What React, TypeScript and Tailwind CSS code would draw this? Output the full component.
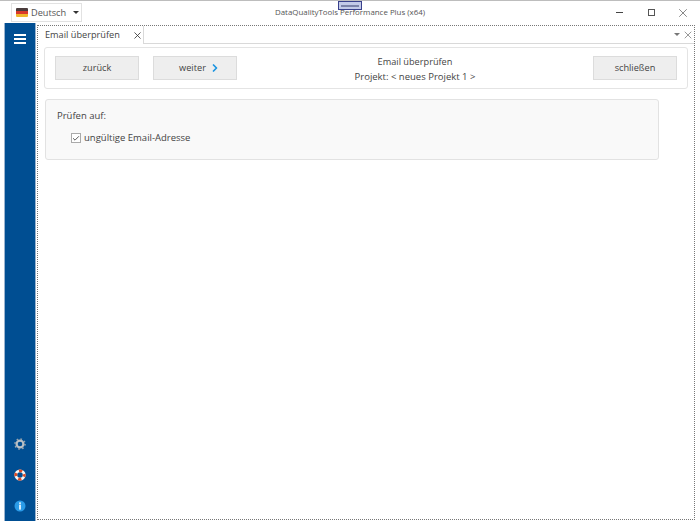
import { X, ChevronRight, Check } from "lucide-react";

function Flag() {
  return (
    <svg width="12" height="9" viewBox="0 0 12 9" className="rounded-[1px]">
      <rect width="12" height="3" fill="#4a3c3c" />
      <rect y="3" width="12" height="3" fill="#d8392b" />
      <rect y="6" width="12" height="3" fill="#efb62c" />
    </svg>
  );
}

function Gear() {
  return (
    <svg width="12" height="12" viewBox="0 0 12 12">
      <circle cx="6" cy="6" r="3.4" fill="none" stroke="#b9c0c6" strokeWidth="2.2" />
      <circle cx="6" cy="6" r="5" fill="none" stroke="#9aa5ad" strokeWidth="1.6" strokeDasharray="1.6 2.3" />
    </svg>
  );
}

function Lifebuoy() {
  return (
    <svg width="12" height="12" viewBox="0 0 12 12">
      <circle cx="6" cy="6" r="4.2" fill="none" stroke="#f4f4f4" strokeWidth="2.8" />
      <circle cx="6" cy="6" r="4.2" fill="none" stroke="#dc4a24" strokeWidth="2.8" strokeDasharray="3.3 3.3" strokeDashoffset="1.6" />
    </svg>
  );
}

function Info() {
  return (
    <svg width="12" height="12" viewBox="0 0 12 12">
      <circle cx="6" cy="6" r="5.5" fill="#2a9be8" />
      <rect x="5.2" y="2.4" width="1.6" height="1.5" fill="#fff" />
      <rect x="5.2" y="4.6" width="1.6" height="5" fill="#fff" />
    </svg>
  );
}

function Btn({ children, className }: { children: React.ReactNode; className?: string }) {
  return (
    <button className={`flex h-[24px] w-[84px] items-center justify-center border border-[#dcdcdc] bg-[#eeeeee] text-[9.2px] text-[#444] ${className ?? ""}`}>
      {children}
    </button>
  );
}

export default function App() {
  return (
    <div className="relative flex h-[525px] w-[700px] flex-col overflow-hidden border-t border-[#bdbdbd] bg-white text-[9.5px] text-[#444] [font-family:'Open_Sans',sans-serif]">
      <div className="absolute left-[338px] top-0 flex h-[9px] w-[24px] items-center justify-center border border-[#39418c] bg-[#c3cbe8]">
        <div className="h-[2px] w-[18px] bg-[#7b83a8]" />
      </div>

      <div className="flex h-[22px] shrink-0 items-center pt-[1px]">
        <div className="ml-[11px] flex h-[19px] w-[71px] items-center border border-[#e2e2e2] pl-[4px]">
          <Flag />
          <span className="ml-[3px] text-[9.2px] text-[#555]">Deutsch</span>
          <svg width="6" height="3" viewBox="0 0 6 3" className="ml-[7px]"><path d="M0 0h6L3 3z" fill="#333" /></svg>
        </div>
        <div className="ml-[193px] whitespace-nowrap text-[7.9px] text-[#555]">DataQualityTools Performance Plus (x64)</div>
        <div className="ml-auto flex items-center">
          <div className="mr-[25px] h-px w-[7px] bg-[#444]" />
          <div className="mr-[21px] h-[7px] w-[7px] border border-[#555]" />
          <X size={14} strokeWidth={1} className="mr-[10px] text-[#333]" />
        </div>
      </div>

      <div className="flex min-h-0 flex-1 pb-[4px] pl-[4px] pr-[5px]">
        <div className="flex w-[32px] shrink-0 flex-col items-center border-l border-r border-[#9bb4cf] bg-[#004e92] pb-[9px]">
          <div className="mt-[11px] flex w-[12px] flex-col gap-[2px]">
            <div className="h-[2px] bg-white" />
            <div className="h-[2px] bg-white" />
            <div className="h-[2px] bg-white" />
          </div>
          <div className="mt-auto flex flex-col items-center gap-[19px]">
            <Gear />
            <Lifebuoy />
            <Info />
          </div>
        </div>

        <div className="mb-[1px] ml-[1px] mt-[2px] flex min-w-0 flex-1 flex-col border border-dotted border-[#777]">
          <div className="flex h-[18px] shrink-0 border-b border-[#d9d9d9]">
            <div className="flex h-[18px] w-[106px] items-center border-r border-[#d9d9d9] bg-white pl-[7px]">
              <span className="whitespace-nowrap text-[9.2px]">Email überprüfen</span>
              <X size={11} strokeWidth={1.8} className="ml-[12px] text-[#333]" />
            </div>
            <div className="ml-auto flex items-center">
              <svg width="6" height="3" viewBox="0 0 6 3"><path d="M0 0h6L3 3z" fill="#777" /></svg>
              <X size={12} strokeWidth={1.5} className="ml-[2px] text-[#777]" />
            </div>
          </div>

          <div className="mx-[6px] mt-[3px] flex h-[42px] shrink-0 items-center rounded-[3px] border border-[#e4e4e4] pl-[10px] pr-[10px]">
            <Btn>zurück</Btn>
            <div className="ml-[14px]">
              <Btn className="gap-[3px] pl-[10px]">
                weiter
                <ChevronRight size={12} strokeWidth={3.5} className="text-[#1c95e0]" />
              </Btn>
            </div>
            <div className="flex-1 pt-[1px] text-center leading-[15px]">
              <div className="text-[9.2px]">Email überprüfen</div>
              <div>Projekt: &lt; neues Projekt 1 &gt;</div>
            </div>
            <Btn>schließen</Btn>
          </div>

          <div className="ml-[7px] mt-[10px] h-[61px] w-[614px] rounded-[3px] border border-[#e2e2e2] bg-[#f9f9f9] pl-[11px] pt-[9px]">
            <div>Prüfen auf:</div>
            <div className="ml-[14px] mt-[8px] flex items-center gap-[3px]">
              <div className="flex h-[10px] w-[10px] items-center justify-center border border-[#aaa] bg-white">
                <Check size={9} strokeWidth={2.4} className="text-[#333]" />
              </div>
              <span>ungültige Email-Adresse</span>
            </div>
          </div>
        </div>
      </div>
    </div>
  );
}
